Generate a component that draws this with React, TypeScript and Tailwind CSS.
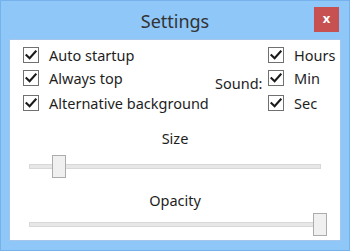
import React from "react";

function Check({ label }: { label?: string }) {
  return (
    <div className="flex items-center h-[16px]">
      <div className="w-[16px] h-[16px] shrink-0 border border-[#707070] bg-white flex items-center justify-center">
        <svg width="12" height="12" viewBox="0 0 12 12">
          <path d="M1.5 6.2 L4.6 9.2 L10.6 2.4" fill="none" stroke="#1a1a1a" strokeWidth="2.1" strokeLinecap="square" />
        </svg>
      </div>
      {label && <span className="ml-[10px] text-[14.5px] leading-none text-[#1e1e1e] whitespace-nowrap">{label}</span>}
    </div>
  );
}

function Slider({ pos }: { pos: number }) {
  return (
    <div className="relative h-[23px] mx-[19px]">
      <div className="absolute left-0 right-0 top-[9px] h-[5px] bg-[#e7e7e7] border border-[#d8d8d8]" />
      <div
        className="absolute top-0 w-[14px] h-[23px] bg-[#f0f0f0] border border-[#acacac]"
        style={{ left: pos }}
      />
    </div>
  );
}

export default function App() {
  return (
    <div
      className="w-[350px] h-[251px] bg-[#8ec7f8] border border-[#75b1ea] flex flex-col"
      style={{ fontFamily: '"Noto Sans", "Open Sans", sans-serif' }}
    >
      <div className="h-[38px] relative flex items-center justify-center">
        <span className="text-[18px] text-[#333] leading-none mt-[1px]">Settings</span>
        <div className="absolute right-[10px] top-[6px] w-[25px] h-[25px] bg-[#c75050] flex items-center justify-center">
          <span className="text-white text-[13px] font-bold leading-none mb-[2px]">x</span>
        </div>
      </div>
      <div className="flex-1 mx-[8px] mb-[9px] bg-white border border-[#a3c6ea] flex flex-col">
        <div className="flex pt-[7px] pl-[13px]">
          <div className="w-[192px] flex flex-col">
            <Check label="Auto startup" />
            <div className="mt-[7px]"><Check label="Always top" /></div>
            <div className="mt-[9px]"><Check label="Alternative background" /></div>
          </div>
          <span className="w-[53px] text-[14.5px] leading-none text-[#1e1e1e] mt-[29px]">Sound:</span>
          <div className="flex flex-col">
            <Check label="Hours" />
            <div className="mt-[7px]"><Check label="Min" /></div>
            <div className="mt-[9px]"><Check label="Sec" /></div>
          </div>
        </div>
        <div className="mt-[20px] text-center text-[14.5px] leading-none text-[#1e1e1e]">Size</div>
        <div className="mt-[9px]"><Slider pos={23} /></div>
        <div className="mt-[15px] text-center text-[14.5px] leading-none text-[#1e1e1e]">Opacity</div>
        <div className="mt-[6px]"><Slider pos={284} /></div>
      </div>
    </div>
  );
}
